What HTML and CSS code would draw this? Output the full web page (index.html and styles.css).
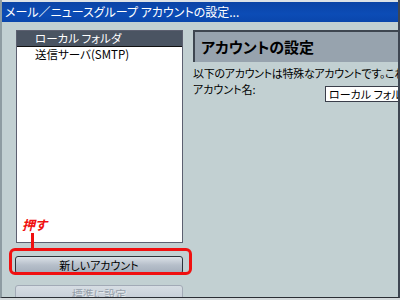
FILE: index.html
```html
<!DOCTYPE html>
<html lang="ja">
<head>
    <meta charset="UTF-8">
    <title>アカウントの設定</title>
    <link rel="stylesheet" href="styles.css">
</head>
<body>
    <div class="window">
        <div class="titlebar">メール／ニュースグループ アカウントの設定...</div>

        <div class="content">
            <div class="left">
                <ul class="accounts">
                    <li class="selected">ローカル フォルダ</li>
                    <li>送信サーバ(SMTP)</li>
                </ul>

                <div class="buttons">
                    <button class="btn">新しいアカウント</button>
                    <button class="btn" disabled>標準に設定</button>
                </div>

                <!-- 注釈 -->
                <div class="note">押す</div>
                <div class="note-line"></div>
                <div class="note-box"></div>
            </div>

            <div class="right">
                <div class="panel-title">アカウントの設定</div>
                <p class="desc">以下のアカウントは特殊なアカウントです。これには個人情報はありません。</p>
                <div class="field">
                    <label for="name">アカウント名:</label>
                    <input type="text" id="name" value="ローカル フォルダ">
                </div>
            </div>
        </div>
    </div>
</body>
</html>
```

FILE: styles.css
```css
body {
    margin: 0;
    background-color: #d4dadc;
    font-family: "Noto Sans CJK JP", "DejaVu Sans", sans-serif;
    font-size: 11px;
    font-feature-settings: "palt";
}
.window {
    width: 396px;
    height: 297px;
    overflow: hidden;
    background-color: #c2d0d2;
    border-left: 2px solid #8e9ca2;
    border-right: 2px solid #3e4652;
    border-bottom: 1px solid #2a2e34;
}
.titlebar {
    height: 20px;
    line-height: 20px;
    border-top: 2px solid #dde2e6;
    padding-left: 3px;
    background: linear-gradient(#0b44a6, #0c4cb6 60%, #0a46ac);
    color: white;
    font-size: 12px;
    white-space: nowrap;
    overflow: hidden;
}
.content {
    display: flex;
    padding-top: 8px;
    padding-left: 13px;
}
.left {
    position: relative;
    width: 168px;
    flex-shrink: 0;
}
.accounts {
    list-style: none;
    margin: 0 0 0 1px;
    padding: 0;
    height: 211px;
    background-color: white;
    border: 1px solid #5c6070;
}
.accounts li {
    height: 15px;
    line-height: 15px;
    padding-left: 18px;
    font-size: 11.5px;
    white-space: nowrap;
}
.accounts li.selected {
    background-color: #4a5462;
    border-bottom: 1px solid #111;
    color: white;
}
.buttons {
    display: flex;
    flex-direction: column;
    gap: 11px;
    margin-top: 13px;
}
.btn {
    width: 168px;
    height: 18px;
    padding: 0;
    border: 1px solid #2c323a;
    border-radius: 3px;
    background: linear-gradient(#dbe1e7, #b6bfca 50%, #a4aebb);
    font-family: inherit;
    font-size: 11px;
    font-feature-settings: "palt";
    color: black;
}
.btn:disabled {
    border-color: #a2aab6;
    background: linear-gradient(#d6dde3, #c2cad4);
    color: #96a0aa;
    text-shadow: 1px 1px 0 #e6ebee;
}
.note {
    position: absolute;
    left: 7px;
    top: 185px;
    color: #f01010;
    font-size: 13px;
    font-weight: bold;
    font-style: italic;
}
.note-line {
    position: absolute;
    left: 16px;
    top: 203px;
    width: 3px;
    height: 17px;
    background-color: #f01010;
}
.note-box {
    position: absolute;
    left: -6px;
    top: 218px;
    width: 177px;
    height: 21px;
    border: 3px solid #f01010;
    border-radius: 6px;
}
.right {
    margin-left: 10px;
    flex: 1;
    white-space: nowrap;
}
.panel-title {
    height: 30px;
    line-height: 30px;
    padding-left: 6px;
    background-color: #97a3ae;
    border-top: 2px solid #3e4650;
    border-left: 2px solid #3e4650;
    font-size: 15px;
    font-weight: bold;
}
.desc {
    margin: 0;
    height: 16px;
    line-height: 16px;
    margin-top: 3px;
    letter-spacing: -0.3px;
}
.field {
    display: flex;
    align-items: flex-start;
    height: 20px;
    line-height: 16px;
}
.field label {
    width: 132px;
}
.field input {
    margin: 5px 0 0 0;
    width: 120px;
    height: 14px;
    padding: 0 3px;
    border: 1px solid #3a3e4a;
    font-family: inherit;
    font-size: 11px;
    font-feature-settings: "palt";
}
```
